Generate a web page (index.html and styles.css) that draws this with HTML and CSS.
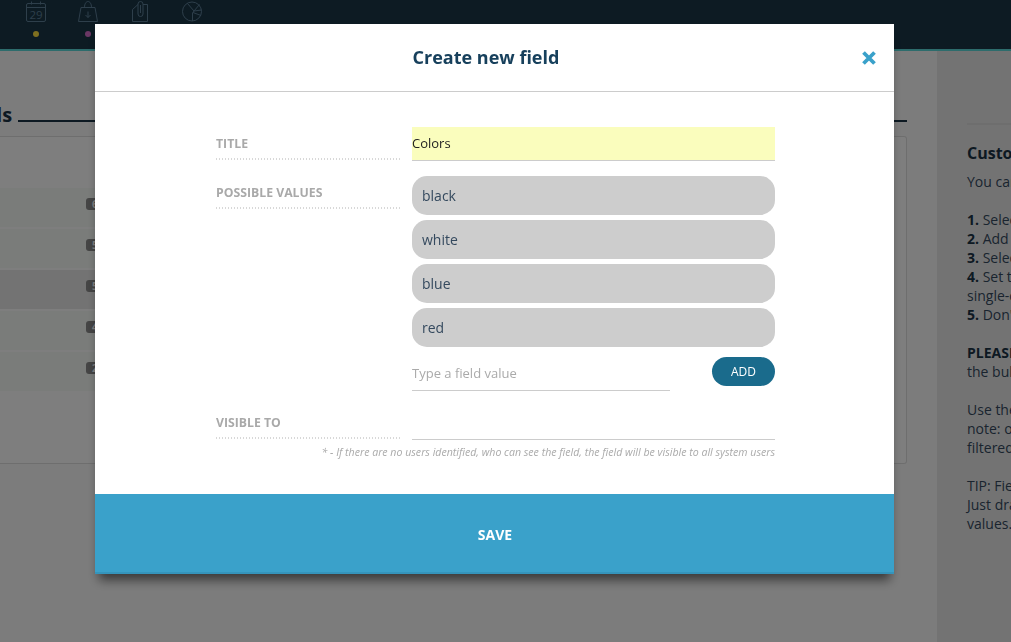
FILE: index.html
```html
<!DOCTYPE html>
<html lang="en">
<head>
  <meta charset="UTF-8" />
  <title>Custom fields</title>
  <link rel="stylesheet" href="styles.css">
</head>
<body>

  <header class="topbar">
    <div class="nav-item">
      <svg width="20" height="21" viewBox="0 0 20 21" fill="none" stroke="#5c7e96" stroke-width="1"><rect x="0.5" y="2.500" width="19" height="18" rx="1.500"/><path d="M0.500 6.500h19M5.500 0.500v3M14.500 0.500v3"/><text class="cal-num" x="10" y="18" text-anchor="middle">29</text></svg>
      <span class="dot dot-yellow"></span>
    </div>
    <div class="nav-item">
      <svg width="20" height="21" viewBox="0 0 20 21" fill="none" stroke="#5c7e96" stroke-width="1"><path d="M3 6.500h14l2.500 14H0.500zM6.500 6.500c0-8 7-8 7 0M10 10.500v6M7.500 14l2.500 2.500 2.500-2.500"/></svg>
      <span class="dot dot-pink"></span>
    </div>
    <div class="nav-item">
      <svg width="20" height="21" viewBox="0 0 20 21" fill="none" stroke="#5c7e96" stroke-width="1"><path d="M2.500 20.500V8.500L8 3.500M13 3.500h4.500v17h-15M8 3v10a2.500 2.500 0 0 0 5 0V3a2.500 2.500 0 0 0-5 0M10.500 4v8"/></svg>
      <span class="dot"></span>
    </div>
    <div class="nav-item">
      <svg width="20" height="21" viewBox="0 0 20 21" fill="none" stroke="#5c7e96" stroke-width="1"><circle cx="10" cy="10.500" r="9.500"/><path d="M10.500 20V12L12 10L5.500 2.500M12 10l5.500-6.500M12 10l7.500-1M11 11.500l8 3"/></svg>
      <span class="dot"></span>
    </div>
  </header>

  <div class="page">
    <main class="content">
      <div class="heading">
        <h2>Custom fields</h2>
        <span class="heading-line"></span>
      </div>
      <section class="panel">
        <ul class="rows">
          <li class="row"><span class="badge">6</span></li>
          <li class="row"><span class="badge">5</span></li>
          <li class="row row-active"><span class="badge">5</span></li>
          <li class="row"><span class="badge">4</span></li>
          <li class="row"><span class="badge">2</span></li>
        </ul>
      </section>
    </main>
    <aside class="help">
      <h3>Custom fields</h3>
      <p>You can add your own fields</p>
      <p><b>1.</b> Select a category<br><b>2.</b> Add a new field<br><b>3.</b> Select the field type<br><b>4.</b> Set the options for<br>single-choice fields<br><b>5.</b> Don't forget to save</p>
      <p><b>PLEASE NOTE:</b> use<br>the bulk edit tool</p>
      <p>Use the filter to search,<br>note: only fields can be<br>filtered by value</p>
      <p>TIP: Fields can be sorted.<br>Just drag and drop the<br>values.</p>
    </aside>
  </div>

  <div class="overlay"></div>

  <div class="modal">
    <div class="modal-head">
      <h1>Create new field</h1>
      <svg class="close" width="14" height="14" viewBox="0 0 14 14"><path d="M1.500 1.500l11 11M12.500 1.500l-11 11" stroke="#3aa1ca" stroke-width="3.800"/></svg>
    </div>

    <form class="modal-body">
      <div class="field field-title">
        <label>TITLE</label>
        <div class="title-value">Colors</div>
      </div>

      <div class="field field-values">
        <label>POSSIBLE VALUES</label>
        <div class="values">
          <div class="value">black</div>
          <div class="value">white</div>
          <div class="value">blue</div>
          <div class="value">red</div>
          <div class="add-row">
            <div class="add-input">Type a field value</div>
            <button type="button" class="add-btn">ADD</button>
          </div>
        </div>
      </div>

      <div class="field field-visible">
        <label>VISIBLE TO</label>
        <div class="visible-input"></div>
      </div>
      <p class="note">* - If there are no users identified, who can see the field, the field will be visible to all system users</p>
    </form>

    <button type="button" class="save">SAVE</button>
  </div>

</body>
</html>
```

FILE: styles.css
```css
* {
  box-sizing: border-box;
}
html, body {
  height: 100%;
}
body {
  margin: 0;
  overflow: hidden;
  font-family: "Open Sans", sans-serif;
  font-size: 14px;
  color: #34495e;
  background: #f9f9f9;
}

.topbar {
  display: flex;
  height: 51px;
  padding: 0 0 0 20px;
  gap: 20px;
  background: #1a3647;
  border-bottom: 2px solid #5ad8d8;
}
.nav-item {
  display: flex;
  flex-direction: column;
  align-items: center;
  width: 32px;
  padding-top: 1px;
}
.cal-num {
  font-family: "Open Sans", sans-serif;
  font-size: 11.500px;
  fill: #5c7e96;
  stroke: none;
}
.dot {
  width: 6px;
  height: 6px;
  margin-top: 9px;
  border-radius: 50%;
}
.dot-yellow {
  background: #ffe040;
}
.dot-pink {
  background: #d46ec8;
}

.page {
  display: flex;
  height: 591px;
}
.content {
  flex: 1;
  padding: 50px 30px 0 0;
}
.heading {
  display: flex;
  align-items: flex-end;
  margin-left: -124px;
  gap: 6px;
}
.heading h2 {
  margin: 0;
  font-size: 20px;
  line-height: 27px;
  font-weight: 700;
  color: #1a3345;
}
.heading-line {
  flex: 1;
  height: 2px;
  margin-bottom: 6px;
  background: #1a3345;
}
.panel {
  height: 328px;
  margin-top: 8px;
  padding: 51px 12px 0 0;
  border: 1px solid #ddd;
  border-left: 0;
  border-radius: 0 3px 3px 0;
  background: #fdfdfd;
}
.rows {
  margin: 0;
  padding: 0;
  list-style: none;
}
.row {
  height: 39px;
  margin-bottom: 2px;
  padding: 10px 0 0 86px;
  background: #f4f8f5;
}
.row-active {
  background: #e6e6e6;
}
.badge {
  display: block;
  width: 24px;
  height: 12px;
  padding-left: 6px;
  border-radius: 3px;
  font-size: 10px;
  line-height: 12px;
  font-weight: 700;
  color: #fff;
  background: #8a8a8a;
}

.help {
  width: 74px;
  padding: 72px 0 0 30px;
  background: #e7e7e7;
  white-space: nowrap;
  font-size: 14px;
  line-height: 19px;
  color: #34495e;
}
.help h3 {
  margin: 0 0 8px;
  padding-top: 17px;
  border-top: 2px solid #ddd;
  font-size: 16px;
  line-height: 22px;
  color: #1a3345;
}
.help p {
  margin: 0 0 19px;
}
.help b {
  color: #1a3345;
}

.overlay {
  position: fixed;
  inset: 0;
  background: rgba(0, 0, 0, 0.5);
}

.modal {
  position: fixed;
  top: 24px;
  left: 95px;
  width: 799px;
  height: 550px;
  display: flex;
  flex-direction: column;
  background: #fff;
  box-shadow: 0 10px 10px -4px rgba(0, 0, 0, 0.55);
}
.modal-head {
  position: relative;
  height: 68px;
  padding-right: 17px;
  border-bottom: 1px solid #ccc;
}
.modal-head h1 {
  margin: 0;
  font-size: 18px;
  line-height: 67px;
  font-weight: 700;
  text-align: center;
  color: #17405c;
}
.close {
  position: absolute;
  top: 27px;
  right: 18px;
}

.modal-body {
  flex: 1;
  padding: 35px 119px 0 121px;
}
.field {
  display: flex;
  gap: 12px;
}
.field label {
  flex: none;
  width: 184px;
  height: 33px;
  padding-top: 8px;
  background: repeating-linear-gradient(90deg, #d8d8d8 0 1.500px, transparent 1.500px 3px) bottom / 100% 2px no-repeat;
  font-size: 12.250px;
  line-height: 17px;
  font-weight: 700;
  color: #a9a9a9;
}
.title-value {
  flex: 1;
  height: 34px;
  border-bottom: 1px solid #ccc;
  background: #fafdbd;
  font-size: 13px;
  line-height: 32px;
  color: #222;
}
.field-values {
  margin-top: 15px;
}
.values {
  flex: 1;
}
.value {
  height: 39px;
  margin-bottom: 5px;
  padding-left: 10px;
  border-radius: 15px;
  background: #cdcdcd;
  font-size: 14px;
  line-height: 39px;
  color: #34495e;
}
.add-row {
  display: flex;
  justify-content: space-between;
  margin-top: 10px;
}
.add-input {
  width: 258px;
  height: 34px;
  border-bottom: 1px solid #ccc;
  font-size: 13px;
  line-height: 33px;
  color: #aaa;
}
.add-btn {
  width: 63px;
  height: 29px;
  padding: 0;
  border: 0;
  border-radius: 15px;
  background: #1a6b8c;
  color: #fff;
  font-family: inherit;
  font-size: 12px;
  font-weight: 500;
}
.field-visible {
  margin-top: 15px;
}
.visible-input {
  flex: 1;
  height: 34px;
  border-bottom: 1px solid #ccc;
}
.note {
  margin: 5px 0 0;
  font-size: 10.600px;
  line-height: 14px;
  font-style: italic;
  white-space: nowrap;
  text-align: right;
  color: #aaa;
}

.save {
  flex: none;
  width: 100%;
  height: 80px;
  padding: 2px 0 0 1px;
  border: 0;
  border-bottom: 2px solid #3594bb;
  background: #3aa1ca;
  color: #fff;
  font-family: inherit;
  font-size: 14px;
  font-weight: 700;
}
```
